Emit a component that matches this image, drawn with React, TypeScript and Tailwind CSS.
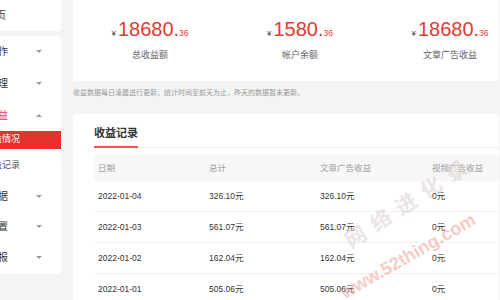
import type { ReactElement } from "react";

const font = { fontFamily: '"Liberation Sans", "Noto Sans CJK SC", sans-serif' };

interface NavItem {
  label: string;
  h: string;
  caret?: "down" | "up";
  active?: boolean;
  open?: boolean;
  sub?: boolean;
}

const navItems: NavItem[] = [
  { label: "创作", h: "h-[31px]", caret: "down" },
  { label: "内容管理", h: "h-[33px]", caret: "down" },
  { label: "收益", h: "h-[31px]", caret: "up", open: true },
  { label: "收益情况", h: "h-[18px]", active: true, sub: true },
  { label: "收益记录", h: "h-[33px]", sub: true },
  { label: "数据", h: "h-[28px]", caret: "down" },
  { label: "设置", h: "h-[33px]", caret: "down" },
  { label: "举报", h: "h-[28px]", caret: "down" },
];

const stats = [
  { whole: "18680.", cents: "36", label: "总收益额" },
  { whole: "1580.", cents: "36", label: "帐户余额" },
  { whole: "18680.", cents: "36", label: "文章广告收益" },
];

const rows = [
  { date: "2022-01-04", total: "326.10元", article: "326.10元", video: "0元" },
  { date: "2022-01-03", total: "561.07元", article: "561.07元", video: "0元" },
  { date: "2022-01-02", total: "162.04元", article: "162.04元", video: "0元" },
  { date: "2022-01-01", total: "505.06元", article: "505.06元", video: "0元" },
];

export default function App(): ReactElement {
  return (
    <div
      className="relative flex h-[300px] w-[500px] overflow-hidden bg-[#f4f4f4]"
      style={font}
    >
      <aside className="-ml-[39px] flex w-[100px] shrink-0 flex-col gap-[5px]">
        <div className="flex h-[31px] items-center rounded-b bg-white pl-[25px] text-[10px] text-[#333]">
          首页
        </div>
        <nav className="flex flex-col rounded bg-white pb-[3px]">
          {navItems.map((item) => (
            <SideItem key={item.label} item={item} />
          ))}
        </nav>
      </aside>

      <main className="ml-[12px] flex w-[426px] shrink-0 flex-col">
        <section className="h-[81px] overflow-hidden rounded-b bg-white pt-[19px]">
          <div className="grid grid-cols-[150px_150px_150px] pl-[2px]">
            {stats.map((s, i) => (
              <div key={i} className="flex flex-col items-center">
                <div className="flex items-baseline leading-[20px]">
                  <span className="mr-[2px] text-[8px] text-[#444]">¥</span>
                  <span className="text-[20px] text-[#e8392e]">{s.whole}</span>
                  <span className="text-[8.5px] text-[#e8392e]">{s.cents}</span>
                </div>
                <p className="mt-[5px] text-[9px] leading-[12px] text-[#666]">
                  {s.label}
                </p>
              </div>
            ))}
          </div>
        </section>

        <p className="h-[33px] pt-[7px] text-[7px] leading-[10px] text-[#999]">
          收益数据每日凌晨进行更新，统计时间至前天为止，昨天的数据暂未更新。
        </p>

        <section className="flex-1 overflow-hidden rounded-t bg-white pl-[21px] pt-[12px]">
          <div className="flex border-b border-[#eeeeee]">
            <h2 className="-mb-px border-b-2 border-[#e9574d] pb-[6px] text-[11px] font-bold leading-[14px] text-[#333]">
              收益记录
            </h2>
          </div>

          <div className="mt-[7px] w-[460px]">
            <div className="grid h-[26px] grid-cols-[111px_111px_112px_111px] items-center bg-[#f7f7f7] pl-[4px] text-[8.5px] text-[#999]">
              <span>日期</span>
              <span>总计</span>
              <span>文章广告收益</span>
              <span>视频广告收益</span>
            </div>
            {rows.map((r) => (
              <div
                key={r.date}
                className="grid h-[31px] grid-cols-[111px_111px_112px_111px] items-center border-b border-[#f0f0f0] pl-[4px] text-[8.5px] text-[#333]"
              >
                <span>{r.date}</span>
                <span>{r.total}</span>
                <span>{r.article}</span>
                <span>{r.video}</span>
              </div>
            ))}
          </div>
        </section>
      </main>

      {/* watermark laid over the table */}
      <div className="pointer-events-none absolute left-[335px] top-[186px] -rotate-[33deg] text-[21px] font-bold tracking-[9px] text-[#d8cccc] opacity-50">
        网络进化录
      </div>
      <div className="pointer-events-none absolute left-[332px] top-[243px] -rotate-[30deg] text-[18px] font-bold text-[#f3aaa0] opacity-60">
        www.52thing.com
      </div>
    </div>
  );
}

function SideItem({ item }: { item: NavItem }): ReactElement {
  const base = `flex ${item.h} items-center justify-between pr-[19px]`;

  if (item.active) {
    return (
      <div className={`${base} bg-[#e5322d] pl-[23px] text-[9px] text-white`}>
        {item.label}
      </div>
    );
  }

  return (
    <div
      className={`${base} ${item.sub ? "pl-[23px] text-[9px] text-[#555]" : "text-[10px]"} ${
        item.open ? "text-[#e8392e]" : item.sub ? "" : "text-[#333]"
      } ${item.sub ? "" : item.label.length > 2 ? "pl-[7px]" : "pl-[27px]"}`}
    >
      <span>{item.label}</span>
      {item.caret === "down" && (
        <span className="h-0 w-0 border-x-[3px] border-t-[3px] border-x-transparent border-t-[#999]" />
      )}
      {item.caret === "up" && (
        <span className="h-0 w-0 border-x-[3px] border-b-[3px] border-x-transparent border-b-[#999]" />
      )}
    </div>
  );
}
